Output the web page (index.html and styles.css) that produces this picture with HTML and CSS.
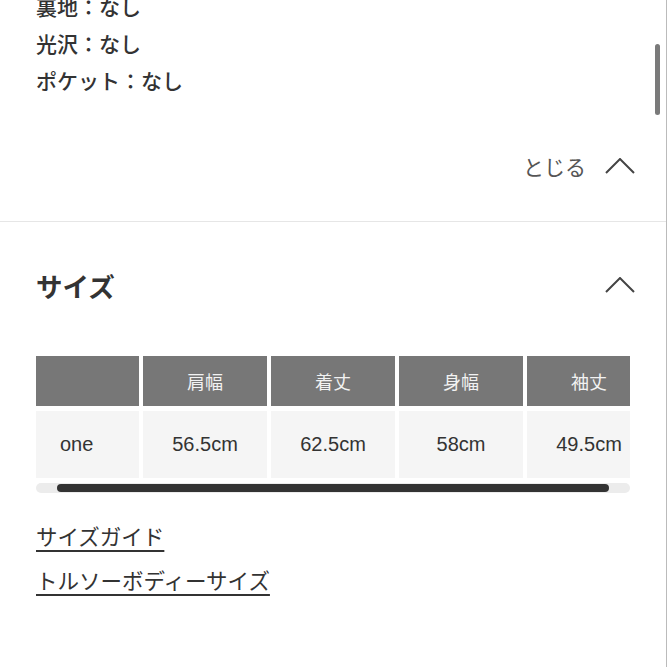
FILE: index.html
```html
<!DOCTYPE html>
<html lang="ja">
<head>
    <meta charset="UTF-8">
    <meta name="viewport" content="width=device-width, initial-scale=1.0">
    <title>サイズ</title>
    <link rel="stylesheet" href="styles.css">
</head>
<body>
    <div class="page">
        <div class="section">
            <ul class="details">
                <li>裏地：なし</li>
                <li>光沢：なし</li>
                <li>ポケット：なし</li>
            </ul>
            <div class="close">
                <span>とじる</span>
                <svg class="chevron" width="30" height="16" viewBox="0 0 30 16">
                    <polyline points="1,15 15,1 29,15" fill="none" stroke="#444" stroke-width="2"/>
                </svg>
            </div>
        </div>

        <div class="divider"></div>

        <div class="section">
            <div class="heading">
                <h2>サイズ</h2>
                <svg class="chevron" width="30" height="16" viewBox="0 0 30 16">
                    <polyline points="1,15 15,1 29,15" fill="none" stroke="#444" stroke-width="2"/>
                </svg>
            </div>

            <div class="table-wrap">
                <div class="size-table">
                    <div class="th"></div>
                    <div class="th">肩幅</div>
                    <div class="th">着丈</div>
                    <div class="th">身幅</div>
                    <div class="th">袖丈</div>
                    <div class="td first">one</div>
                    <div class="td">56.5cm</div>
                    <div class="td">62.5cm</div>
                    <div class="td">58cm</div>
                    <div class="td">49.5cm</div>
                </div>
            </div>
            <div class="hscroll"><div class="hthumb"></div></div>

            <div class="links">
                <a href="#">サイズガイド</a>
                <a href="#">トルソーボディーサイズ</a>
            </div>
        </div>

        <div class="vscroll"><div class="vthumb"></div></div>
    </div>
</body>
</html>
```

FILE: styles.css
```css
*{
    margin: 0;
    padding: 0;
    box-sizing: border-box;
}
body{
    background: #fff;
    color: #333;
    font-family: "Noto Sans CJK JP", "Noto Sans", sans-serif;
    overflow: hidden;
}
.page{
    position: relative;
    width: 667px;
    height: 667px;
    overflow: hidden;
    border-right: 1px solid #bbb;
}
.section{
    padding: 0 36px;
}
.details{
    list-style: none;
    margin-top: -12px;
    font-size: 21px;
    font-weight: 500;
    line-height: 37px;
}
.close{
    display: flex;
    justify-content: flex-end;
    align-items: center;
    height: 40px;
    margin-top: 47px;
    font-size: 21px;
    color: #555;
}
.close span{
    margin-right: 19px;
}
.chevron{
    margin-right: -5px;
}
.divider{
    height: 1px;
    background: #e6e6e6;
    margin-top: 35px;
}
.heading{
    display: flex;
    justify-content: space-between;
    align-items: center;
    height: 40px;
    margin-top: 43px;
}
.heading h2{
    font-size: 26.5px;
    font-weight: 700;
    color: #333;
}
.table-wrap{
    margin-top: 51px;
    overflow: hidden;
}
.size-table{
    display: grid;
    grid-template-columns: 103px repeat(4, 124px);
    grid-template-rows: 50px 67px;
    gap: 5px 4px;
    width: 640px;
}
.th{
    background: #777;
    color: #f2f2f2;
    font-size: 18px;
    display: flex;
    align-items: center;
    justify-content: center;
}
.td{
    background: #f5f5f5;
    font-family: "Liberation Sans", "Noto Sans CJK JP", sans-serif;
    font-size: 20px;
    color: #333;
    display: flex;
    align-items: center;
    justify-content: center;
}
.td.first{
    justify-content: flex-start;
    padding-left: 24px;
}
.hscroll{
    height: 10px;
    margin-top: 5px;
    background: #ececec;
    border-radius: 5px;
    padding: 1px 21px;
}
.hthumb{
    height: 8px;
    background: #333;
    border-radius: 4px;
}
.links{
    margin-top: 21px;
}
.links a{
    display: table;
    font-size: 21.5px;
    line-height: 44px;
    color: #333;
    text-decoration: underline;
    text-decoration-thickness: 2px;
    text-underline-offset: 5px;
}
.vscroll{
    position: absolute;
    top: 0;
    right: 0;
    width: 12px;
    height: 667px;
}
.vthumb{
    position: absolute;
    top: 44px;
    left: 1px;
    width: 5px;
    height: 71px;
    border-radius: 3px;
    background: #7a7a7a;
}
```
